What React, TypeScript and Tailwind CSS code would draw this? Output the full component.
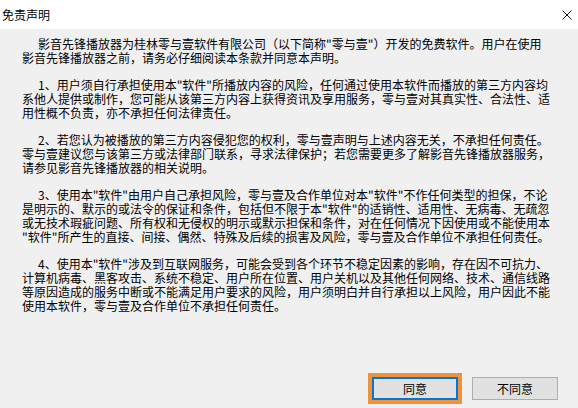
import React, { useState } from "react";

// each paragraph is kept as its visual lines so the wrapping matches the dialog
const paragraphs: string[][] = [
  [
    "影音先锋播放器为桂林零与壹软件有限公司（以下简称\"零与壹\"）开发的免费软件。用户在使用",
    "影音先锋播放器之前，请务必仔细阅读本条款并同意本声明。",
  ],
  [
    "1、用户须自行承担使用本\"软件\"所播放内容的风险，任何通过使用本软件而播放的第三方内容均",
    "系他人提供或制作，您可能从该第三方内容上获得资讯及享用服务，零与壹对其真实性、合法性、适",
    "用性概不负责，亦不承担任何法律责任。",
  ],
  [
    "2、若您认为被播放的第三方内容侵犯您的权利，零与壹声明与上述内容无关，不承担任何责任。",
    "零与壹建议您与该第三方或法律部门联系，寻求法律保护；若您需要更多了解影音先锋播放器服务，",
    "请参见影音先锋播放器的相关说明。",
  ],
  [
    "3、使用本\"软件\"由用户自己承担风险，零与壹及合作单位对本\"软件\"不作任何类型的担保，不论",
    "是明示的、默示的或法令的保证和条件，包括但不限于本\"软件\"的适销性、适用性、无病毒、无疏忽",
    "或无技术瑕疵问题、所有权和无侵权的明示或默示担保和条件，对在任何情况下因使用或不能使用本",
    "\"软件\"所产生的直接、间接、偶然、特殊及后续的损害及风险，零与壹及合作单位不承担任何责任。",
  ],
  [
    "4、使用本\"软件\"涉及到互联网服务，可能会受到各个环节不稳定因素的影响，存在因不可抗力、",
    "计算机病毒、黑客攻击、系统不稳定、用户所在位置、用户关机以及其他任何网络、技术、通信线路",
    "等原因造成的服务中断或不能满足用户要求的风险，用户须明白并自行承担以上风险，用户因此不能",
    "使用本软件，零与壹及合作单位不承担任何责任。",
  ],
];

const App: React.FC = () => {
  const [answer, setAnswer] = useState<"agree" | "disagree" | null>(null);

  return (
    <div
      className="w-[578px] h-[408px] flex flex-col bg-[#f0f0f0] text-black overflow-hidden"
      style={{ fontFamily: '"Noto Sans CJK SC", "Noto Sans", sans-serif' }}
    >
      {/* title bar */}
      <div className="h-[29px] bg-white flex items-center justify-between pl-[2px] pr-[6px]">
        <span className="text-[12px] leading-none text-black">免责声明</span>
        <button className="w-[10px] h-[10px] flex items-center justify-center">
          <svg width="10" height="10" viewBox="0 0 10 10">
            <path d="M0.5 0.5 L9.5 9.5 M9.5 0.5 L0.5 9.5" stroke="#111" strokeWidth="1" />
          </svg>
        </button>
      </div>

      {/* body text */}
      <div className="flex flex-col gap-[13px] pl-[22px] pt-[8px]">
        {paragraphs.map((lines, i) => (
          <div key={i} className="flex flex-col">
            {lines.map((line, j) => (
              <div
                key={j}
                className={`h-[14px] text-[12px] leading-[14px] whitespace-nowrap ${
                  j === 0 ? "pl-4" : ""
                }`}
              >
                {line}
              </div>
            ))}
          </div>
        ))}
      </div>

      {/* buttons */}
      <div className="mt-auto flex justify-end items-center gap-[10px] pr-[20px] pb-[4px]">
        <div className="border-[4px] border-[#f0923c]">
          <button
            onClick={() => setAnswer("agree")}
            className="w-[86px] h-[23px] border-2 border-[#0078d7] bg-[#e1e1e1] text-[12px] leading-none flex items-center justify-center"
          >
            同意
          </button>
        </div>
        <button
          onClick={() => setAnswer("disagree")}
          className={`w-[86px] h-[23px] border border-[#adadad] bg-[#e1e1e1] text-[12px] leading-none flex items-center justify-center ${
            answer === "disagree" ? "bg-[#e5f1fb]" : ""
          }`}
        >
          不同意
        </button>
      </div>
    </div>
  );
};

export default App;
